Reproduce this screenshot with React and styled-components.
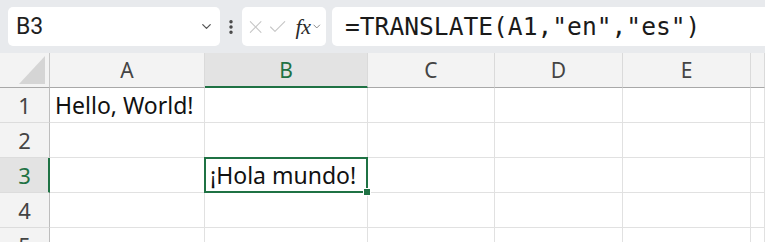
import React from "react";
import styled, { createGlobalStyle, css } from "styled-components";
import { X, Check, ChevronDown, EllipsisVertical } from "lucide-react";

const Global = createGlobalStyle`
  html, body { margin: 0; padding: 0; background: #ffffff; overflow: hidden; }
  body { font-family: "Noto Sans", sans-serif; }
`;

const GREEN = "#1f7244";

const Page = styled.div`
  width: 765px;
  height: 242px;
  display: flex;
  flex-direction: column;
  overflow: hidden;
`;

const Toolbar = styled.div`
  height: 53px;
  flex: none;
  box-sizing: border-box;
  background: #e8eaed;
  padding: 7px 0 7px 8px;
  display: flex;
  align-items: stretch;
`;

const NameBox = styled.div`
  width: 212px;
  box-sizing: border-box;
  background: #fff;
  border-radius: 5px;
  display: flex;
  align-items: center;
  justify-content: space-between;
  padding: 0 6px 0 8px;
  font-family: Roboto, sans-serif;
  font-size: 23px;
  color: #1f1f1f;
`;

const Dots = styled.div`
  width: 22px;
  display: flex;
  align-items: center;
  justify-content: center;
  color: #444;
`;

const FuncBox = styled.div`
  width: 84px;
  box-sizing: border-box;
  background: #fff;
  border-radius: 5px;
  display: flex;
  align-items: center;
  padding: 0 3px 0 3px;
  gap: 1px;
`;

const Fx = styled.span`
  font-family: "Liberation Serif", serif;
  font-style: italic;
  font-size: 22px;
  font-weight: 500;
  color: #2a2a2a;
  margin-left: 6px;
  letter-spacing: -0.5px;
`;

const FormulaBar = styled.div`
  flex: 1;
  margin-left: 6px;
  margin-right: -10px;
  background: #fff;
  border-radius: 5px;
  display: flex;
  align-items: center;
  padding-left: 13px;
  font-family: "DejaVu Sans Mono", monospace;
  font-size: 24.6px;
  color: #1a1a1a;
  white-space: pre;
`;

const Sheet = styled.div`
  display: grid;
  grid-template-columns: 50px 155px 163px 127px 128px 128px 1fr;
  grid-auto-rows: 35px;
  flex: none;
`;

const Corner = styled.div`
  background: #f3f3f3;
  border-right: 1px solid #c8c8c8;
  border-bottom: 1px solid #a8a8a8;
  box-sizing: border-box;
  display: flex;
  align-items: flex-end;
  justify-content: flex-end;
  padding: 0 4px 3px 0;
`;

const Triangle = styled.div`
  width: 26px;
  height: 28px;
  background: #d5d5d5;
  clip-path: polygon(100% 0, 100% 100%, 0 100%);
`;

const ColHead = styled.div`
  box-sizing: border-box;
  background: ${(p) => (p.$active ? "#e3e3e3" : "#f3f3f3")};
  border-right: 1px solid #dadada;
  border-bottom: ${(p) => (p.$active ? `2px solid ${GREEN}` : "1px solid #a8a8a8")};
  display: flex;
  align-items: center;
  justify-content: center;
  font-family: "Noto Sans", sans-serif;
  font-size: 21px;
  color: ${(p) => (p.$active ? GREEN : "#444")};
  padding-top: ${(p) => (p.$active ? "1px" : "0")};
`;

const RowHead = styled.div`
  box-sizing: border-box;
  background: ${(p) => (p.$active ? "#e3e3e3" : "#f3f3f3")};
  border-right: ${(p) => (p.$active ? `2px solid ${GREEN}` : "1px solid #bdbdbd")};
  border-bottom: 1px solid #dcdcdc;
  display: flex;
  align-items: center;
  justify-content: center;
  font-family: "Noto Sans", sans-serif;
  font-size: 22px;
  color: ${(p) => (p.$active ? GREEN : "#444")};
  padding-left: ${(p) => (p.$active ? "1px" : "0")};
`;

const Cell = styled.div`
  position: relative;
  box-sizing: border-box;
  border-right: 1px solid #e1e1e1;
  border-bottom: 1px solid #e1e1e1;
  display: flex;
  align-items: flex-end;
  padding: 0 0 1px 5px;
  font-family: "Noto Sans", sans-serif;
  font-size: 23px;
  line-height: 32px;
  color: #111;
  white-space: nowrap;
  ${(p) =>
    p.$selected &&
    css`
      &::after {
        content: "";
        position: absolute;
        left: -1px;
        top: -1px;
        right: -1px;
        bottom: -1px;
        border: 2px solid ${GREEN};
        pointer-events: none;
      }
    `}
`;

const Handle = styled.span`
  position: absolute;
  right: -4px;
  bottom: -4px;
  width: 6px;
  height: 6px;
  background: ${GREEN};
  border: 1px solid #fff;
  z-index: 2;
`;

const cols = ["A", "B", "C", "D", "E", ""];
const data = {
  "1-0": "Hello, World!",
  "3-1": "¡Hola mundo!",
};

export default function App() {
  return (
    <Page>
      <Global />
      <Toolbar>
        <NameBox>
          <span>B3</span>
          <ChevronDown size={15} color="#555" strokeWidth={2} />
        </NameBox>
        <Dots>
          <EllipsisVertical size={18} strokeWidth={2.6} />
        </Dots>
        <FuncBox>
          <X size={24} color="#c6c6c6" strokeWidth={1.2} />
          <Check size={24} color="#c6c6c6" strokeWidth={1.2} />
          <Fx>fx</Fx>
          <ChevronDown size={13} color="#777" strokeWidth={1.8} />
        </FuncBox>
        <FormulaBar>=TRANSLATE(A1,"en","es")</FormulaBar>
      </Toolbar>
      <Sheet>
        <Corner>
          <Triangle />
        </Corner>
        {cols.map((c, i) => (
          <ColHead key={i} $active={c === "B"}>
            {c}
          </ColHead>
        ))}
        {[1, 2, 3, 4, 5].map((r) => (
          <React.Fragment key={r}>
            <RowHead $active={r === 3}>{r}</RowHead>
            {cols.map((c, i) => {
              const sel = r === 3 && i === 1;
              return (
                <Cell key={i} $selected={sel}>
                  {data[`${r}-${i}`] || ""}
                  {sel && <Handle />}
                </Cell>
              );
            })}
          </React.Fragment>
        ))}
      </Sheet>
    </Page>
  );
}
